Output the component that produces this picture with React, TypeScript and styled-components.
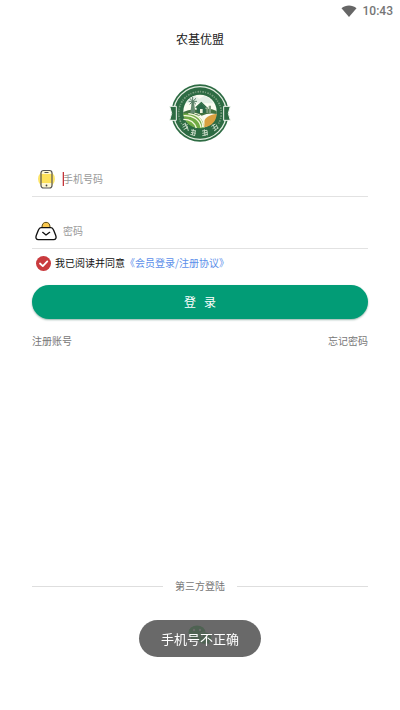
import React, { useState } from "react";
import styled, { createGlobalStyle } from "styled-components";

const GlobalStyle = createGlobalStyle`
  *, *::before, *::after { box-sizing: border-box; }
  body {
    margin: 0;
    background: #fff;
    font-family: "Noto Sans CJK SC", sans-serif;
    font-size: 10px;
    line-height: 16px;
    color: #222;
  }
  button, input { font: inherit; color: inherit; }
`;

const Page = styled.div`
  display: flex;
  flex-direction: column;
  min-height: 100vh;
`;

const StatusBar = styled.div`
  display: flex;
  justify-content: flex-end;
  align-items: center;
  gap: 6px;
  height: 22px;
  padding-right: 7px;
  font: 500 12px/22px Roboto, sans-serif;
  color: #757575;
`;

const Title = styled.h1`
  margin: 0;
  font-size: 12px;
  line-height: 34px;
  font-weight: 400;
  text-align: center;
  color: #222;
`;

const Brand = styled.div`
  display: flex;
  justify-content: center;
  padding: 27px 0 2px;
`;

const Form = styled.form`
  display: flex;
  flex-direction: column;
  padding: 0 32px;
`;

const Field = styled.label`
  display: flex;
  align-items: center;
  gap: 6px;
  height: 52px;
  padding: 16px 0 0 3px;
  border-bottom: 1px solid #e2e2e2;
`;

const InputWrap = styled.span<{ $caret?: boolean }>`
  position: relative;
  display: flex;
  flex: 1;
  &::before {
    content: "";
    display: ${(p) => (p.$caret ? "block" : "none")};
    position: absolute;
    left: 0;
    top: 1px;
    width: 1px;
    height: 14px;
    background: #c4343a;
    box-shadow: -1px 0 rgba(196, 52, 58, 0.3);
  }
`;

const Input = styled.input`
  flex: 1;
  min-width: 0;
  height: 16px;
  padding: 0;
  border: 0;
  outline: 0;
  background: transparent;
  &::placeholder { color: #999; opacity: 1; }
`;

const Agreement = styled.div`
  display: flex;
  align-items: center;
  height: 28px;
  padding-left: 4px;
`;

const CheckLabel = styled.label`
  display: flex;
  align-items: center;
  gap: 4px;
  color: #111;
`;

const CheckWrap = styled.span`
  position: relative;
  display: flex;
  width: 15px;
  height: 15px;
  svg { position: absolute; inset: 0; pointer-events: none; }
`;

const Checkbox = styled.input`
  appearance: none;
  width: 15px;
  height: 15px;
  margin: 0;
  border-radius: 50%;
  background: #d3d3d3;
  &:checked { background: #c93a3e; }
`;

const TermsLink = styled.a`
  color: #5c8fea;
  text-decoration: none;
`;

const LoginButton = styled.button`
  height: 34px;
  margin-top: 8px;
  padding: 0;
  border: 0;
  border-radius: 17px;
  background: #029c76;
  box-shadow: 0 1px 2px rgba(0, 70, 50, 0.4);
  color: #fff;
  font-size: 12px;
  white-space: pre;
`;

const Links = styled.nav`
  display: flex;
  justify-content: space-between;
  margin-top: 14px;
`;

const TextLink = styled.a`
  color: #777;
  text-decoration: none;
`;

const ThirdParty = styled.section`
  display: flex;
  flex-direction: column;
  align-items: center;
  gap: 31px;
  margin-top: auto;
  padding: 32px 32px 65px;
`;

const Divider = styled.div`
  display: flex;
  align-items: center;
  align-self: stretch;
  gap: 12px;
  color: #777;
  &::before, &::after {
    content: "";
    flex: 1;
    height: 1px;
    background: #dedede;
  }
`;

const WechatButton = styled.button`
  display: flex;
  padding: 0;
  border: 0;
  background: none;
`;

const Toast = styled.div`
  position: fixed;
  left: 50%;
  bottom: 53px;
  transform: translateX(-50%);
  padding: 0 22px;
  border-radius: 19px;
  background: rgba(84, 84, 84, 0.88);
  color: #fff;
  font-size: 13px;
  line-height: 37px;
  white-space: nowrap;
`;

const WifiIcon = () => (
  <svg width="16" height="12" viewBox="0 0 16 12" aria-hidden="true">
    <path d="M0.5 3.2C4.8-.4 11.2-.4 15.5 3.2L8 12Z" fill="#666" />
  </svg>
);

const PhoneIcon = () => (
  <svg width="22" height="20" viewBox="0 0 44 40" aria-hidden="true">
    <circle cx="23" cy="20" r="17" fill="#fde56a" />
    <rect x="12" y="3" width="22" height="35" rx="5" fill="#fff8d2" />
    <path d="M12 10h22v18H12z" fill="#fde15b" />
    <rect x="12" y="3" width="22" height="35" rx="5" fill="none" stroke="#555" strokeWidth="2.4" />
    <path d="M19 7h8" stroke="#555" strokeWidth="2" />
    <circle cx="23" cy="33" r="1.8" fill="#444" />
  </svg>
);

const PasswordIcon = () => (
  <svg width="22" height="20" viewBox="0 0 66 60" aria-hidden="true">
    <path d="M20 22C20 9 25 3 33 3s13 6 13 19z" fill="#fbc94e" />
    <path d="M21 18c0-9 5-14 12-14s12 5 12 14" fill="none" stroke="#5a4c1f" strokeWidth="3" />
    <path d="M18 20h30c4 0 6 3 8 8l6 15c3 8 0 13-6 13H10c-6 0-9-5-6-13l6-15c2-5 4-8 8-8z" fill="#fff" stroke="#111" strokeWidth="4" />
    <path d="M23 34l10 8 11-8" fill="none" stroke="#111" strokeWidth="4" strokeLinecap="round" strokeLinejoin="round" />
  </svg>
);

const CheckMark = () => (
  <svg width="15" height="15" viewBox="0 0 15 15" aria-hidden="true">
    <path d="M4 7.5l2.8 2.6 4.5-4.7" fill="none" stroke="#fff" strokeWidth="1.8" strokeLinecap="round" strokeLinejoin="round" />
  </svg>
);

const WechatIcon = () => (
  <svg width="24" height="20" viewBox="0 0 48 40" aria-hidden="true">
    <ellipse cx="18" cy="15" rx="17" ry="14" fill="#22c040" />
    <path d="M7 23l-2 8 9-5z" fill="#22c040" />
    <ellipse cx="33" cy="26" rx="14" ry="12" fill="#22c040" stroke="#fff" />
    <path d="M37 35l6 4-1-8z" fill="#22c040" />
    <g fill="#fff">
      <circle cx="12" cy="10" r="2.4" />
      <circle cx="24" cy="10" r="2.4" />
      <circle cx="28" cy="22" r="2" />
      <circle cx="38" cy="22" r="2" />
    </g>
  </svg>
);

const Logo = () => (
  <svg width="62" height="60" viewBox="26 20 186 180" role="img" aria-label="农基优盟">
    <circle cx="119" cy="110" r="86" fill="#2d6b43" />
    <circle cx="119" cy="110" r="79" fill="none" stroke="#e4eee2" strokeWidth="4" />
    <circle cx="119" cy="110" r="64" fill="none" stroke="#7b9f81" strokeWidth="5" strokeDasharray="3 4 5 3" />
    <path d="M62 144a66 66 0 0 0 114 0" fill="none" stroke="#2d6b43" strokeWidth="17" />
    <path d="M28 90h20v42H28l6-21zM210 90h-20v42h20l-6-21z" fill="#2d6b43" stroke="#f3f7f1" strokeWidth="3" />
    <circle cx="119" cy="106" r="54" fill="#2d6b43" />
    <circle cx="119" cy="105" r="50" fill="#fbfcf2" />
    <path d="M76 80q10-18 28-21l13 8 14-8q20 5 28 22z" fill="#e3eee5" />
    <path d="M69 107q22-12 49-5 26-10 51 2v9q-24-5-45 5l-55-3z" fill="#43733f" />
    <path d="M94 76h7l4 34H90z" fill="#658a70" />
    <path d="M97 62v26M85 75h25M88 66l19 18M107 66L88 84" stroke="#547c64" strokeWidth="3" />
    <path d="M109 110V93l14-12 13 12v17z" fill="#2b6848" />
    <path d="M106 94l17-15 16 15" fill="none" stroke="#2d6b43" strokeWidth="4" />
    <path d="M119 98h8v12h-8z" fill="#eef2dd" />
    <path d="M138 93h5v17h-5zM145 88h7v22h-7z" fill="#7d9d7d" />
    <path d="M131 153c-4-24 6-36 38-41-1 22-14 37-38 41z" fill="#d9a03f" />
    <path d="M68 112c32-4 65 9 62 43-33 4-57-13-62-43z" fill="#70ab44" />
    <path d="M70 118c28-2 49 13 52 36M69 129c21 0 34 10 39 26M84 112c26 2 44 17 43 41" fill="none" stroke="#f5f7df" strokeWidth="4" />
    <path d="M102 111c25 3 32 16 28 41" fill="none" stroke="#f5f7df" strokeWidth="3" />
    <g fill="none" stroke="#c4d6c3" strokeWidth="3">
      <path d="M66 146l11-6M67 153l15-9M75 142l5 16M70 160l12-7M80 148l4 16" />
      <path d="M92 161l15 3M92 168l14 3M99 158l-3 18M90 174l14 4M105 163l-2 15" />
      <path d="M125 164l15-2M126 171l15-3M132 159l2 20M126 178l16-4M140 162l1 15" />
      <path d="M153 150l12-7M157 157l13-9M158 144l8 18M161 164l13-10M168 145l5 13" />
    </g>
  </svg>
);

export default function App() {
  const [agreed, setAgreed] = useState(true);
  return (
    <>
      <GlobalStyle />
      <Page>
        <StatusBar>
          <WifiIcon />
          <span>10:43</span>
        </StatusBar>
        <Title>农基优盟</Title>
        <Brand>
          <Logo />
        </Brand>
        <Form onSubmit={(e) => e.preventDefault()}>
          <Field>
            <PhoneIcon />
            <InputWrap $caret>
              <Input type="tel" aria-label="手机号码" placeholder="手机号码" />
            </InputWrap>
          </Field>
          <Field>
            <PasswordIcon />
            <InputWrap>
              <Input type="password" aria-label="密码" placeholder="密码" />
            </InputWrap>
          </Field>
          <Agreement>
            <CheckLabel>
              <CheckWrap>
                <Checkbox type="checkbox" checked={agreed} onChange={(e) => setAgreed(e.target.checked)} />
                <CheckMark />
              </CheckWrap>
              我已阅读并同意
            </CheckLabel>
            <TermsLink href="#terms">《会员登录/注册协议》</TermsLink>
          </Agreement>
          <LoginButton type="submit">{"登   录"}</LoginButton>
          <Links>
            <TextLink href="#register">注册账号</TextLink>
            <TextLink href="#forgot">忘记密码</TextLink>
          </Links>
        </Form>
        <ThirdParty>
          <Divider>第三方登陆</Divider>
          <WechatButton type="button" aria-label="微信">
            <WechatIcon />
          </WechatButton>
        </ThirdParty>
        <Toast role="status">手机号不正确</Toast>
      </Page>
    </>
  );
}
